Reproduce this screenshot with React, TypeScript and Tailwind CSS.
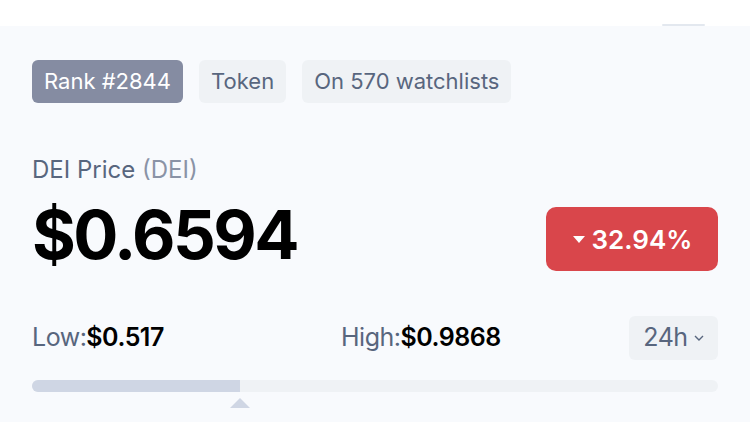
import React from "react";

const Badge = ({ children, dark }: { children: React.ReactNode; dark?: boolean }) => (
  <div
    className={
      "h-[43px] px-3 flex items-center rounded-md text-[22px] " +
      (dark ? "bg-[#858ca2] text-white" : "bg-[#eff2f5] text-[#58667e]")
    }
  >
    {children}
  </div>
);

const App = () => {
  const low = 0.517;
  const high = 0.9868;
  const fill = 30.3;

  return (
    <div className="w-[750px] h-[422px] overflow-hidden bg-[#f8fafd] font-['Inter',sans-serif]">
      {/* top strip from the section above */}
      <div className="h-[26px] bg-white relative">
        <div className="absolute right-[45px] bottom-0 w-[43px] h-[2px] rounded-full bg-[#e3e8ef]" />
      </div>

      <div className="px-8 pt-[34px]">
        <div className="flex gap-4">
          <Badge dark>Rank #2844</Badge>
          <Badge>Token</Badge>
          <Badge>On 570 watchlists</Badge>
        </div>

        <div className="mt-[55px] text-[24px] leading-none text-[#58667e]">
          DEI Price <span className="text-[#8a93a6]">(DEI)</span>
        </div>

        <div className="mt-[19px] flex items-start justify-between">
          <div className="text-[67px] leading-none font-bold text-black tracking-[-2.5px]">$0.6594</div>
          <div className="mt-[6px] w-[172px] h-[64px] rounded-[10px] bg-[#d9464b] text-white flex items-center justify-center gap-1.5 text-[26px] font-semibold">
            <svg width="14" height="9" viewBox="0 0 14 9">
              <path d="M1 1h12L7 8z" fill="white" />
            </svg>
            32.94%
          </div>
        </div>

        <div className="mt-[45px] flex items-center text-[25px] tracking-[-0.5px]">
          <div className="w-[309px] text-[#58667e]">
            Low:<span className="font-semibold text-black">${low}</span>
          </div>
          <div className="flex-1 text-[#58667e]">
            High:<span className="font-semibold text-black">${high}</span>
          </div>
          <div className="h-[44px] w-[89px] rounded-md bg-[#eff2f5] flex items-center justify-center gap-1.5 text-[#58667e]">
            24h
            <svg width="10" height="6" viewBox="0 0 10 6">
              <path d="M1 1l4 4 4-4" stroke="#58667e" strokeWidth="1.4" fill="none" />
            </svg>
          </div>
        </div>

        <div className="mt-[20px] relative">
          <div className="h-[12px] rounded-full bg-[#eff2f5] overflow-hidden">
            <div className="h-full bg-[#cfd6e4]" style={{ width: `${fill}%` }} />
          </div>
          <div
            className="absolute top-[18px] -translate-x-1/2"
            style={{ left: `${fill}%` }}
          >
            <svg width="20" height="10" viewBox="0 0 20 10">
              <path d="M10 0l10 10H0z" fill="#cfd6e4" />
            </svg>
          </div>
        </div>
      </div>
    </div>
  );
};

export default App;
